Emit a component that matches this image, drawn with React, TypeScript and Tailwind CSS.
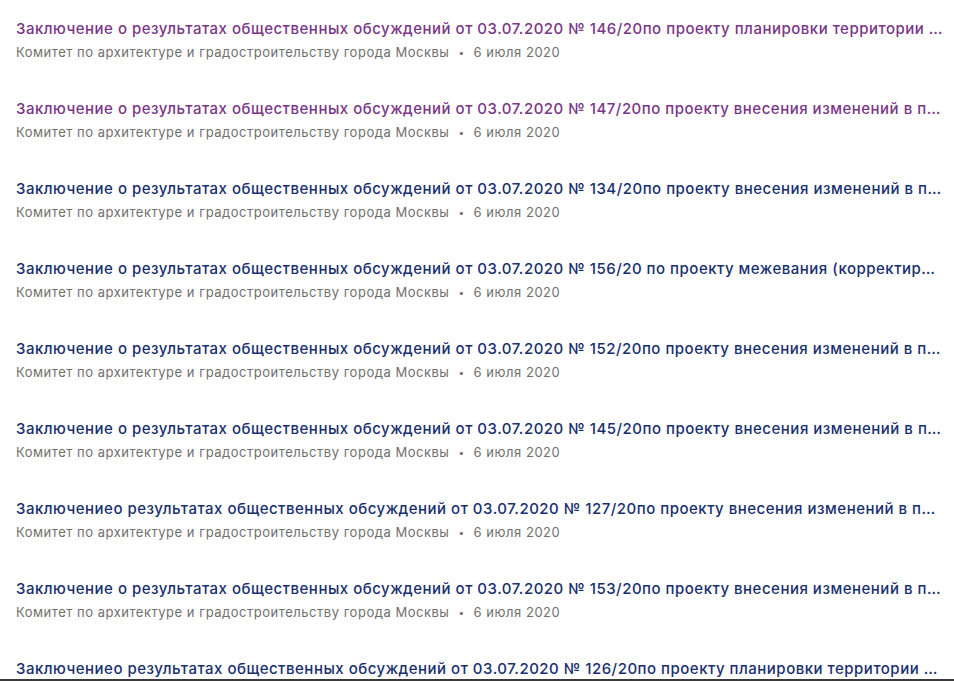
const items = [
  { title: "Заключение о результатах общественных обсуждений от 03.07.2020 № 146/20по проекту планировки территории линейного объекта", visited: true },
  { title: "Заключение о результатах общественных обсуждений от 03.07.2020 № 147/20по проекту внесения изменений в правила землепользования", visited: true },
  { title: "Заключение о результатах общественных обсуждений от 03.07.2020 № 134/20по проекту внесения изменений в правила землепользования" },
  { title: "Заключение о результатах общественных обсуждений от 03.07.2020 № 156/20 по проекту межевания (корректировки) территории квартала" },
  { title: "Заключение о результатах общественных обсуждений от 03.07.2020 № 152/20по проекту внесения изменений в правила землепользования" },
  { title: "Заключение о результатах общественных обсуждений от 03.07.2020 № 145/20по проекту внесения изменений в правила землепользования" },
  { title: "Заключениео результатах общественных обсуждений от 03.07.2020 № 127/20по проекту внесения изменений в правила землепользования" },
  { title: "Заключение о результатах общественных обсуждений от 03.07.2020 № 153/20по проекту внесения изменений в правила землепользования" },
  { title: "Заключениео результатах общественных обсуждений от 03.07.2020 № 126/20по проекту планировки территории линейного объекта" },
];

function NewsItem({ title, visited }: { title: string; visited?: boolean }) {
  return (
    <li className="h-[80px] pt-[19px]">
      <a
        href="#"
        className={
          "block truncate text-[15px] leading-5 font-medium tracking-[0.5px] " +
          (visited ? "text-[#7a3688]" : "text-[#182f70]")
        }
      >
        {title}
      </a>
      <div className="mt-[3px] flex items-center text-[13px] leading-5 tracking-[0.52px] text-[#6f6f6f]">
        <span>Комитет по архитектуре и градостроительству города Москвы</span>
        <span className="mx-[9px] text-[10px]">•</span>
        <span>6 июля 2020</span>
      </div>
    </li>
  );
}

export default function App() {
  return (
    <div
      className="flex h-screen flex-col bg-white"
      style={{ fontFamily: "Inter, 'Noto Sans', sans-serif" }}
    >
      <ul className="flex-1 overflow-hidden pl-4 pr-[11px]">
        {items.map((item, i) => (
          <NewsItem key={i} {...item} />
        ))}
      </ul>
      <div className="h-[2px] bg-[#3a3a3a]" />
    </div>
  );
}
